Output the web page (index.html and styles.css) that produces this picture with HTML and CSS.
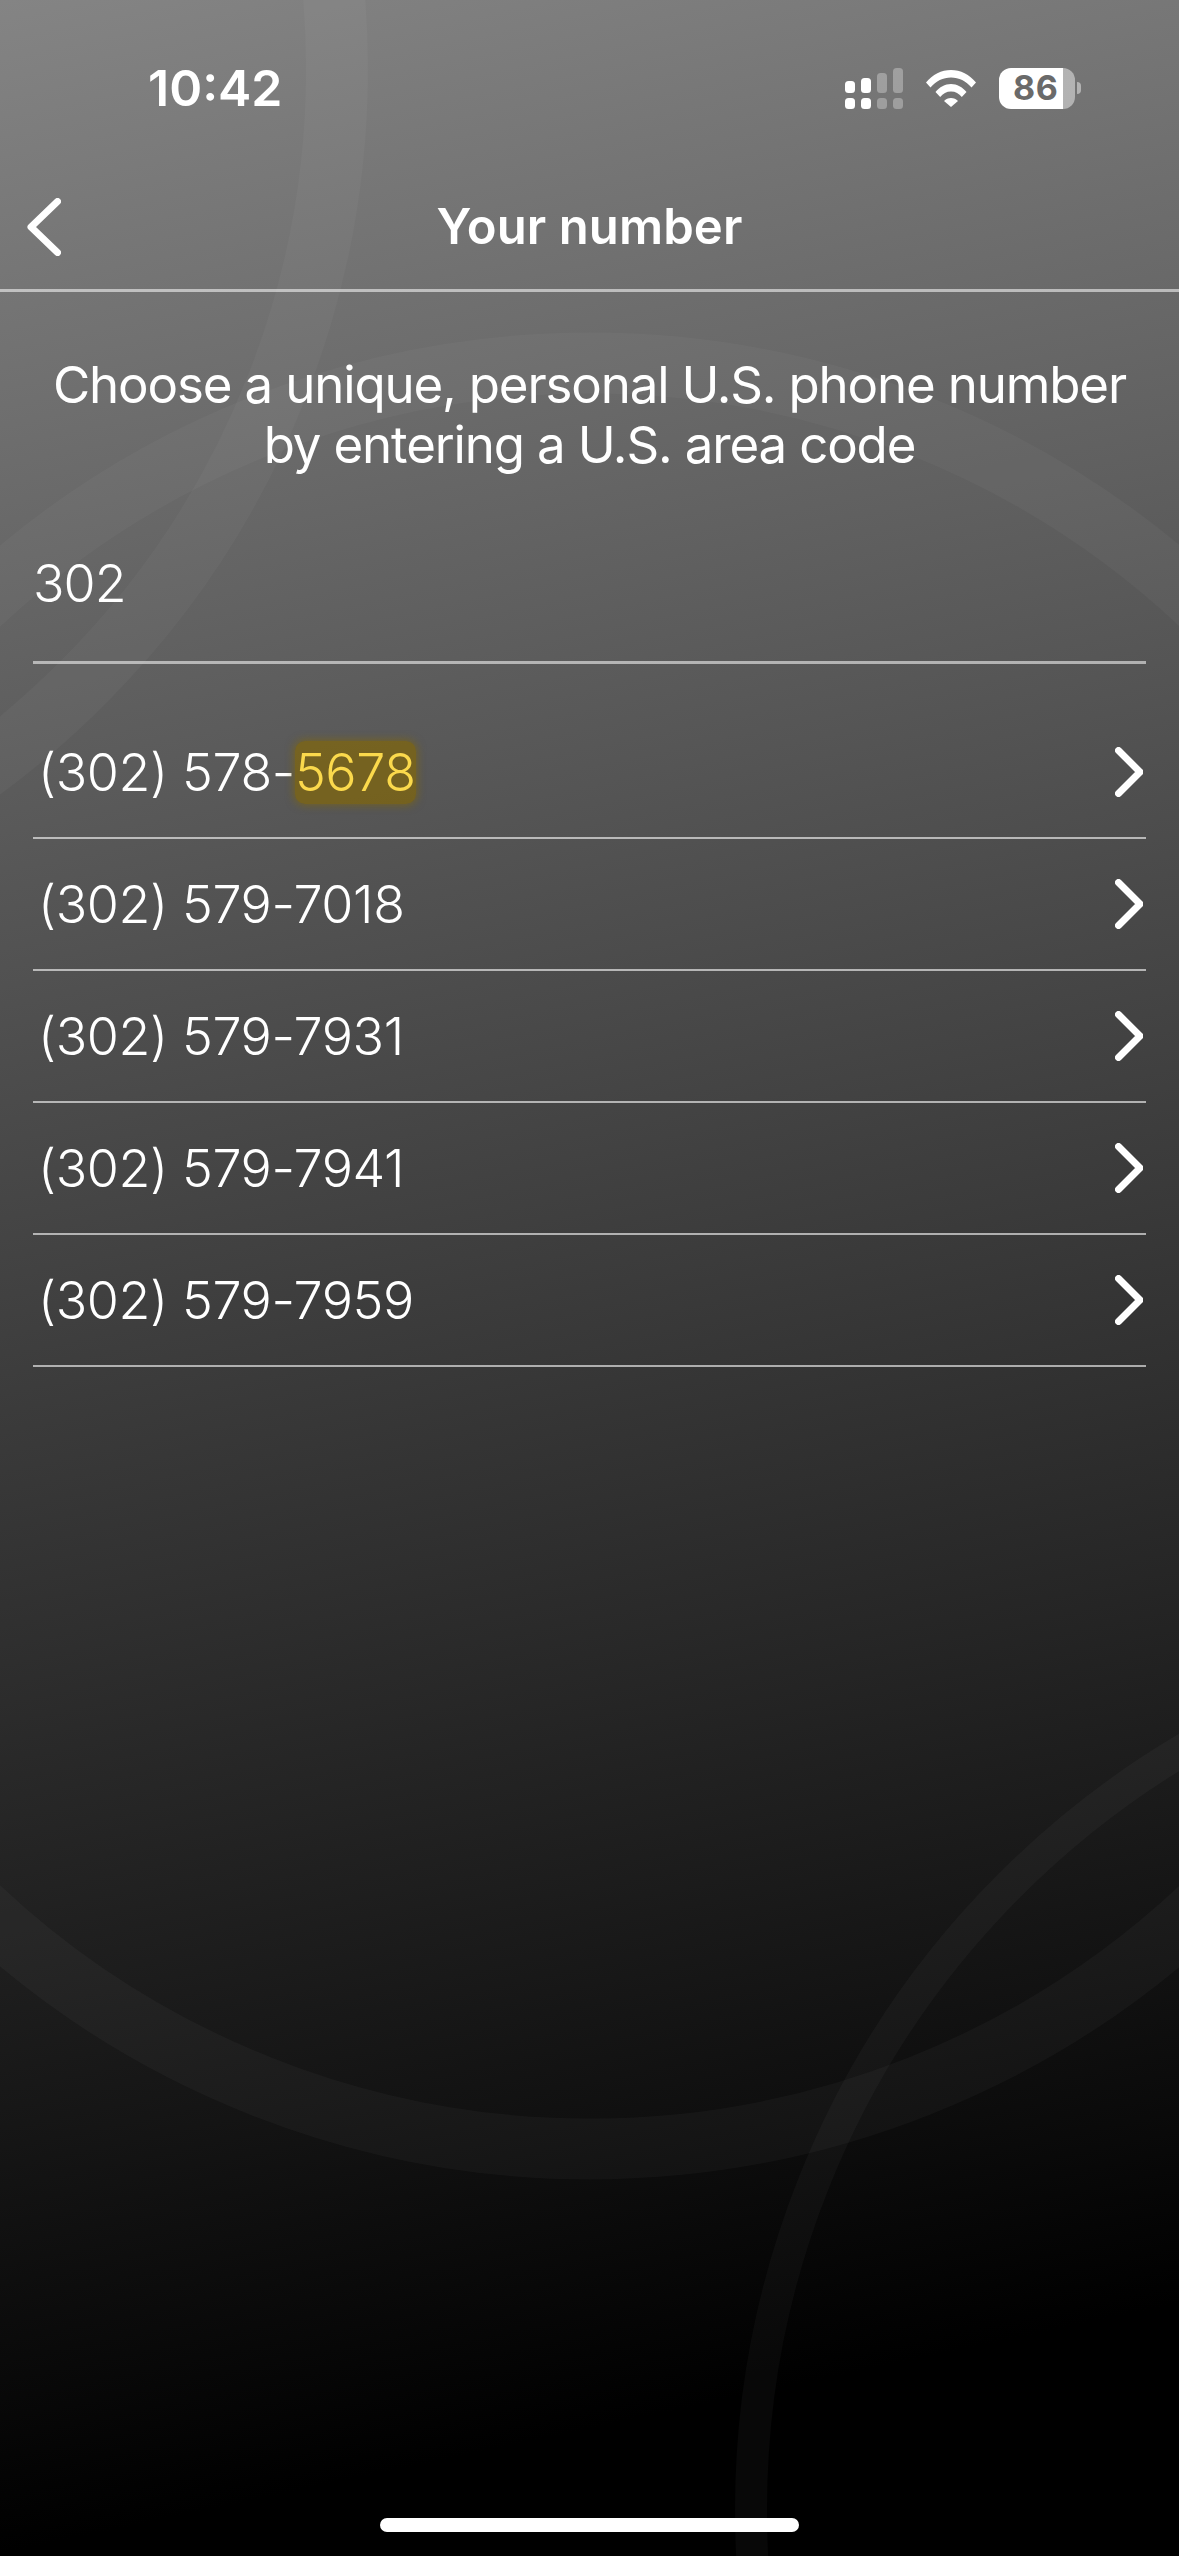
FILE: index.html
```html
<!DOCTYPE html>
<html lang="en">
<head>
<meta charset="utf-8">
<title>Your number</title>
<link rel="stylesheet" href="styles.css">
</head>
<body>
<main class="screen">
  <svg class="rings" width="1179" height="2556" viewBox="0 0 1179 2556" aria-hidden="true">
    <circle class="ring" cx="590" cy="1256" r="893" stroke-width="61"/>
    <circle class="ring" cx="-531" cy="69" r="868" stroke-width="62"/>
    <circle class="ring" cx="1635" cy="2510" r="884" stroke-width="32"/>
  </svg>

  <div class="status">
    <span class="time">10:42</span>
    <div class="status-icons">
      <svg class="signal" width="58" height="41" viewBox="0 0 58 41" aria-hidden="true">
        <rect x="0" y="13" width="10" height="12" rx="3.5"/>
        <rect x="16" y="10" width="10" height="15" rx="3.5"/>
        <rect class="dim" x="32" y="5" width="10" height="20" rx="3.5"/>
        <rect class="dim" x="48" y="0" width="10" height="25" rx="3.5"/>
        <rect x="0" y="30" width="10" height="11" rx="3.5"/>
        <rect x="16" y="30" width="10" height="11" rx="3.5"/>
        <rect class="dim" x="32" y="30" width="10" height="11" rx="3.5"/>
        <rect class="dim" x="48" y="30" width="10" height="11" rx="3.5"/>
      </svg>
      <svg class="wifi" width="50" height="37" viewBox="0 0 50 37" aria-hidden="true">
        <path d="M0 12.500C6.500 4.500 15.500 0 25 0s18.500 4.500 25 12.500l-4.500 5C40 11 33 7.500 25 7.500S10 11 4.500 17.500Z"/>
        <path d="M9.500 22C13.500 17 19 14 25 14s11.500 3 15.500 8l-4.700 5C33 23.500 29.500 21.500 25 21.500S17 23.500 14.200 27Z"/>
        <path d="M18 31c1.800-2 4.200-3 7-3s5.200 1 7 3l-7 6Z"/>
      </svg>
      <div class="battery">
        <div class="battery-body"><span class="battery-level">86</span></div>
        <div class="battery-cap"></div>
      </div>
    </div>
  </div>

  <header class="nav">
    <svg class="back" width="34" height="58" viewBox="0 0 34 58" aria-hidden="true">
      <path d="M30.500 3.500 4 29l26.500 25.500"/>
    </svg>
    <h1 class="title">Your number</h1>
  </header>

  <p class="intro">Choose a unique, personal U.S. phone number<br>by entering a U.S. area code</p>

  <div class="field">302</div>

  <ul class="numbers">
    <li class="number"><span>(302) 578-<mark class="hit">5678</mark></span><svg class="chev" width="28" height="50" viewBox="0 0 28 50" aria-hidden="true"><path d="M3.500 3.500 25 25 3.500 46.500"/></svg></li>
    <li class="number"><span>(302) 579-7018</span><svg class="chev" width="28" height="50" viewBox="0 0 28 50" aria-hidden="true"><path d="M3.500 3.500 25 25 3.500 46.500"/></svg></li>
    <li class="number"><span>(302) 579-7931</span><svg class="chev" width="28" height="50" viewBox="0 0 28 50" aria-hidden="true"><path d="M3.500 3.500 25 25 3.500 46.500"/></svg></li>
    <li class="number"><span>(302) 579-7941</span><svg class="chev" width="28" height="50" viewBox="0 0 28 50" aria-hidden="true"><path d="M3.500 3.500 25 25 3.500 46.500"/></svg></li>
    <li class="number"><span>(302) 579-7959</span><svg class="chev" width="28" height="50" viewBox="0 0 28 50" aria-hidden="true"><path d="M3.500 3.500 25 25 3.500 46.500"/></svg></li>
  </ul>

  <div class="home-bar"></div>
</main>
</body>
</html>
```
FILE: styles.css
```css
* { box-sizing: border-box; }
html, body { margin: 0; padding: 0; background: #000; }
.screen {
  position: relative;
  width: 1179px;
  height: 2556px;
  overflow: hidden;
  display: flex;
  flex-direction: column;
  color: #fff;
  font-family: "Inter", "Liberation Sans", sans-serif;
  background: linear-gradient(168deg, #848484 0%, #000 91%);
}
.rings { position: absolute; inset: 0; }
.ring { fill: none; stroke: #fff; stroke-opacity: 0.03; }
.status, .nav, .intro, .field, .numbers, .home-bar { position: relative; }

.status {
  height: 176px;
  display: flex;
  align-items: center;
  justify-content: space-between;
  padding: 0 98px 0 148px;
}
.time { font-size: 50px; font-weight: 600; letter-spacing: 0; line-height: 1; }
.status-icons { display: flex; align-items: center; gap: 23px; }
.signal rect { fill: #fff; }
.signal .dim { fill-opacity: 0.3; }
.wifi path { fill: #fff; }
.battery { display: flex; align-items: center; gap: 2px; }
.battery-body {
  width: 76px;
  height: 41px;
  border-radius: 12px;
  background: linear-gradient(90deg, #fff 84%, rgba(255,255,255,.45) 84%);
  display: flex;
  align-items: center;
  padding-left: 14px;
}
.battery-level { font-size: 34px; font-weight: 700; color: #6a6a6a; line-height: 1; letter-spacing: 0.5px; }
.battery-cap {
  width: 4px;
  height: 12px;
  border-radius: 0 6px 6px 0;
  background: rgba(255,255,255,.45);
}

.nav {
  height: 116px;
  border-bottom: 3px solid rgba(255,255,255,.55);
  display: flex;
  align-items: center;
  justify-content: center;
}
.back { position: absolute; left: 27px; top: 22px; fill: none; stroke: #fff; stroke-width: 7; stroke-linecap: round; stroke-linejoin: round; }
.title { margin: 0 0 10px; font-size: 49px; font-weight: 600; line-height: 1.2; letter-spacing: 0.1px; }

.intro {
  margin: 63px 0 0;
  text-align: center;
  font-size: 51px;
  line-height: 60px;
  font-weight: 400;
  letter-spacing: -1.15px;
}
.field {
  margin: 0 33px;
  margin-top: 45px;
  height: 144px;
  padding: 33px 0 0;
  border-bottom: 3px solid rgba(255,255,255,.55);
  font-size: 52px;
  line-height: 62px;
  font-weight: 350;
  letter-spacing: -1px;
}
.numbers { list-style: none; margin: 0 33px; padding: 43px 0 0; }
.number {
  height: 132px;
  display: flex;
  align-items: center;
  justify-content: space-between;
  padding: 0 3px 0 5px;
  border-bottom: 2px solid rgba(255,255,255,.6);
  font-size: 52px;
  font-weight: 350;
  letter-spacing: -0.4px;
}
.hit {
  color: #fbd94c;
  background: rgba(130,102,8,.7);
  box-shadow: 0 0 9px 1px rgba(130,102,8,.7);
  border-radius: 10px;
}
.chev { fill: none; stroke: #fff; stroke-width: 7; stroke-linecap: round; stroke-linejoin: round; }

.home-bar {
  margin: auto auto 24px;
  width: 419px;
  height: 14px;
  border-radius: 7px;
  background: #fff;
}
```
